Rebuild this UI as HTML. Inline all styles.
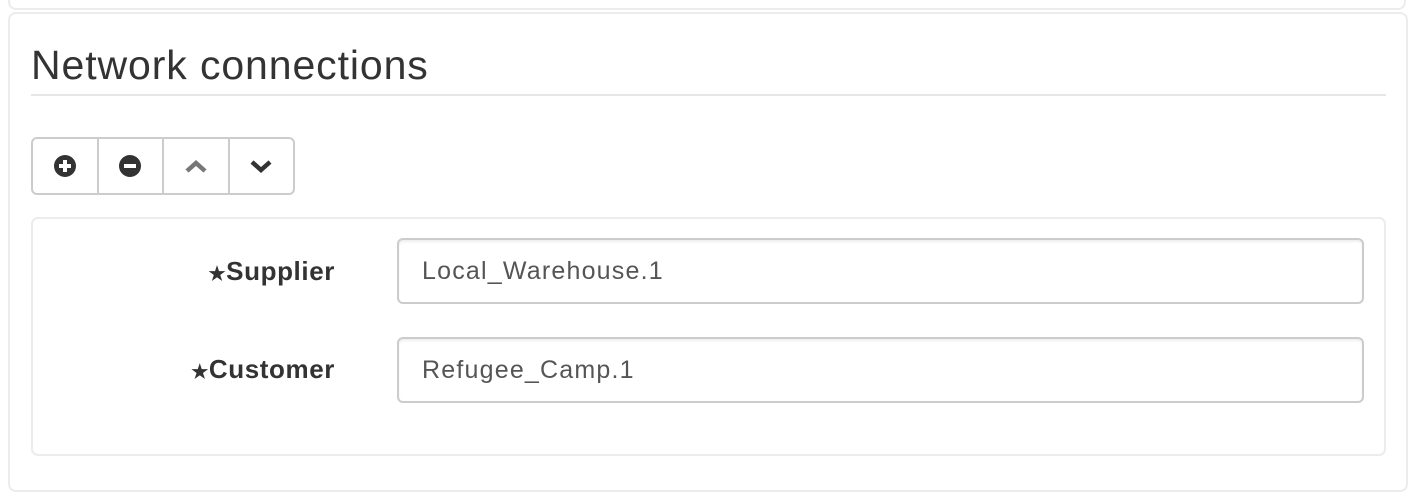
<!DOCTYPE html>
<html><head><style>
body{margin:0;width:1416px;height:468px;background:#fff;font-family:"Liberation Sans",Arial,sans-serif;position:relative;overflow:hidden}
.top{position:absolute;left:8px;top:-20px;width:1398px;height:30px;border:2px solid #ececec;border-radius:8px;box-sizing:border-box}
.panel{position:absolute;left:8px;top:12px;width:1400px;height:480px;border:2px solid #ececec;border-radius:8px;box-sizing:border-box}
h1{position:absolute;left:31px;top:42px;margin:0;font-weight:normal;font-size:41px;letter-spacing:0.9px;color:#333;line-height:46px}
.hr{position:absolute;left:31px;top:94px;width:1355px;height:2px;background:#e6e6e6}
.bg{position:absolute;left:31px;top:137px;width:264px;height:58px;border:2px solid #ccc;border-radius:6px;box-sizing:border-box;display:flex}
.bg div{flex:1;border-right:2px solid #ccc;display:flex;align-items:center;justify-content:center}
.bg div:last-child{border-right:none}
.well{position:absolute;left:31px;top:217px;width:1355px;height:239px;border:2px solid #ececec;border-radius:7px;box-sizing:border-box}
.lab{position:absolute;right:1081px;font-weight:bold;font-size:26px;letter-spacing:0.6px;color:#333}
.lab span{font-size:19px}
.inp{position:absolute;left:397px;width:967px;height:66px;border:2px solid #ccc;border-radius:6px;box-sizing:border-box;font-size:25px;letter-spacing:1.2px;color:#555;padding-left:23px;line-height:62px;box-shadow:inset 0 2px 2px rgba(0,0,0,.07)}
</style></head><body>
<div class="top"></div>
<div class="panel"></div>
<h1>Network connections</h1>
<div class="hr"></div>
<div class="bg">
<div><svg width="22" height="22" viewBox="0 0 22 22"><circle cx="11" cy="11" r="11" fill="#333"/><rect x="5" y="9" width="12" height="4" fill="#fff"/><rect x="9" y="5" width="4" height="12" fill="#fff"/></svg></div>
<div><svg width="22" height="22" viewBox="0 0 22 22"><circle cx="11" cy="11" r="11" fill="#333"/><rect x="5" y="9" width="12" height="4" fill="#fff"/></svg></div>
<div><svg width="22" height="14" viewBox="0 0 22 14"><path d="M2 12 L11 4 L20 12" stroke="#777" stroke-width="4.5" fill="none"/></svg></div>
<div><svg width="22" height="14" viewBox="0 0 22 14"><path d="M2 3 L11 11 L20 3" stroke="#333" stroke-width="4.5" fill="none"/></svg></div>
</div>
<div class="well"></div>
<div class="lab" style="top:256px"><span>★</span>Supplier</div>
<div class="inp" style="top:238px">Local_Warehouse.1</div>
<div class="lab" style="top:354px"><span>★</span>Customer</div>
<div class="inp" style="top:337px">Refugee_Camp.1</div>
</body></html>
